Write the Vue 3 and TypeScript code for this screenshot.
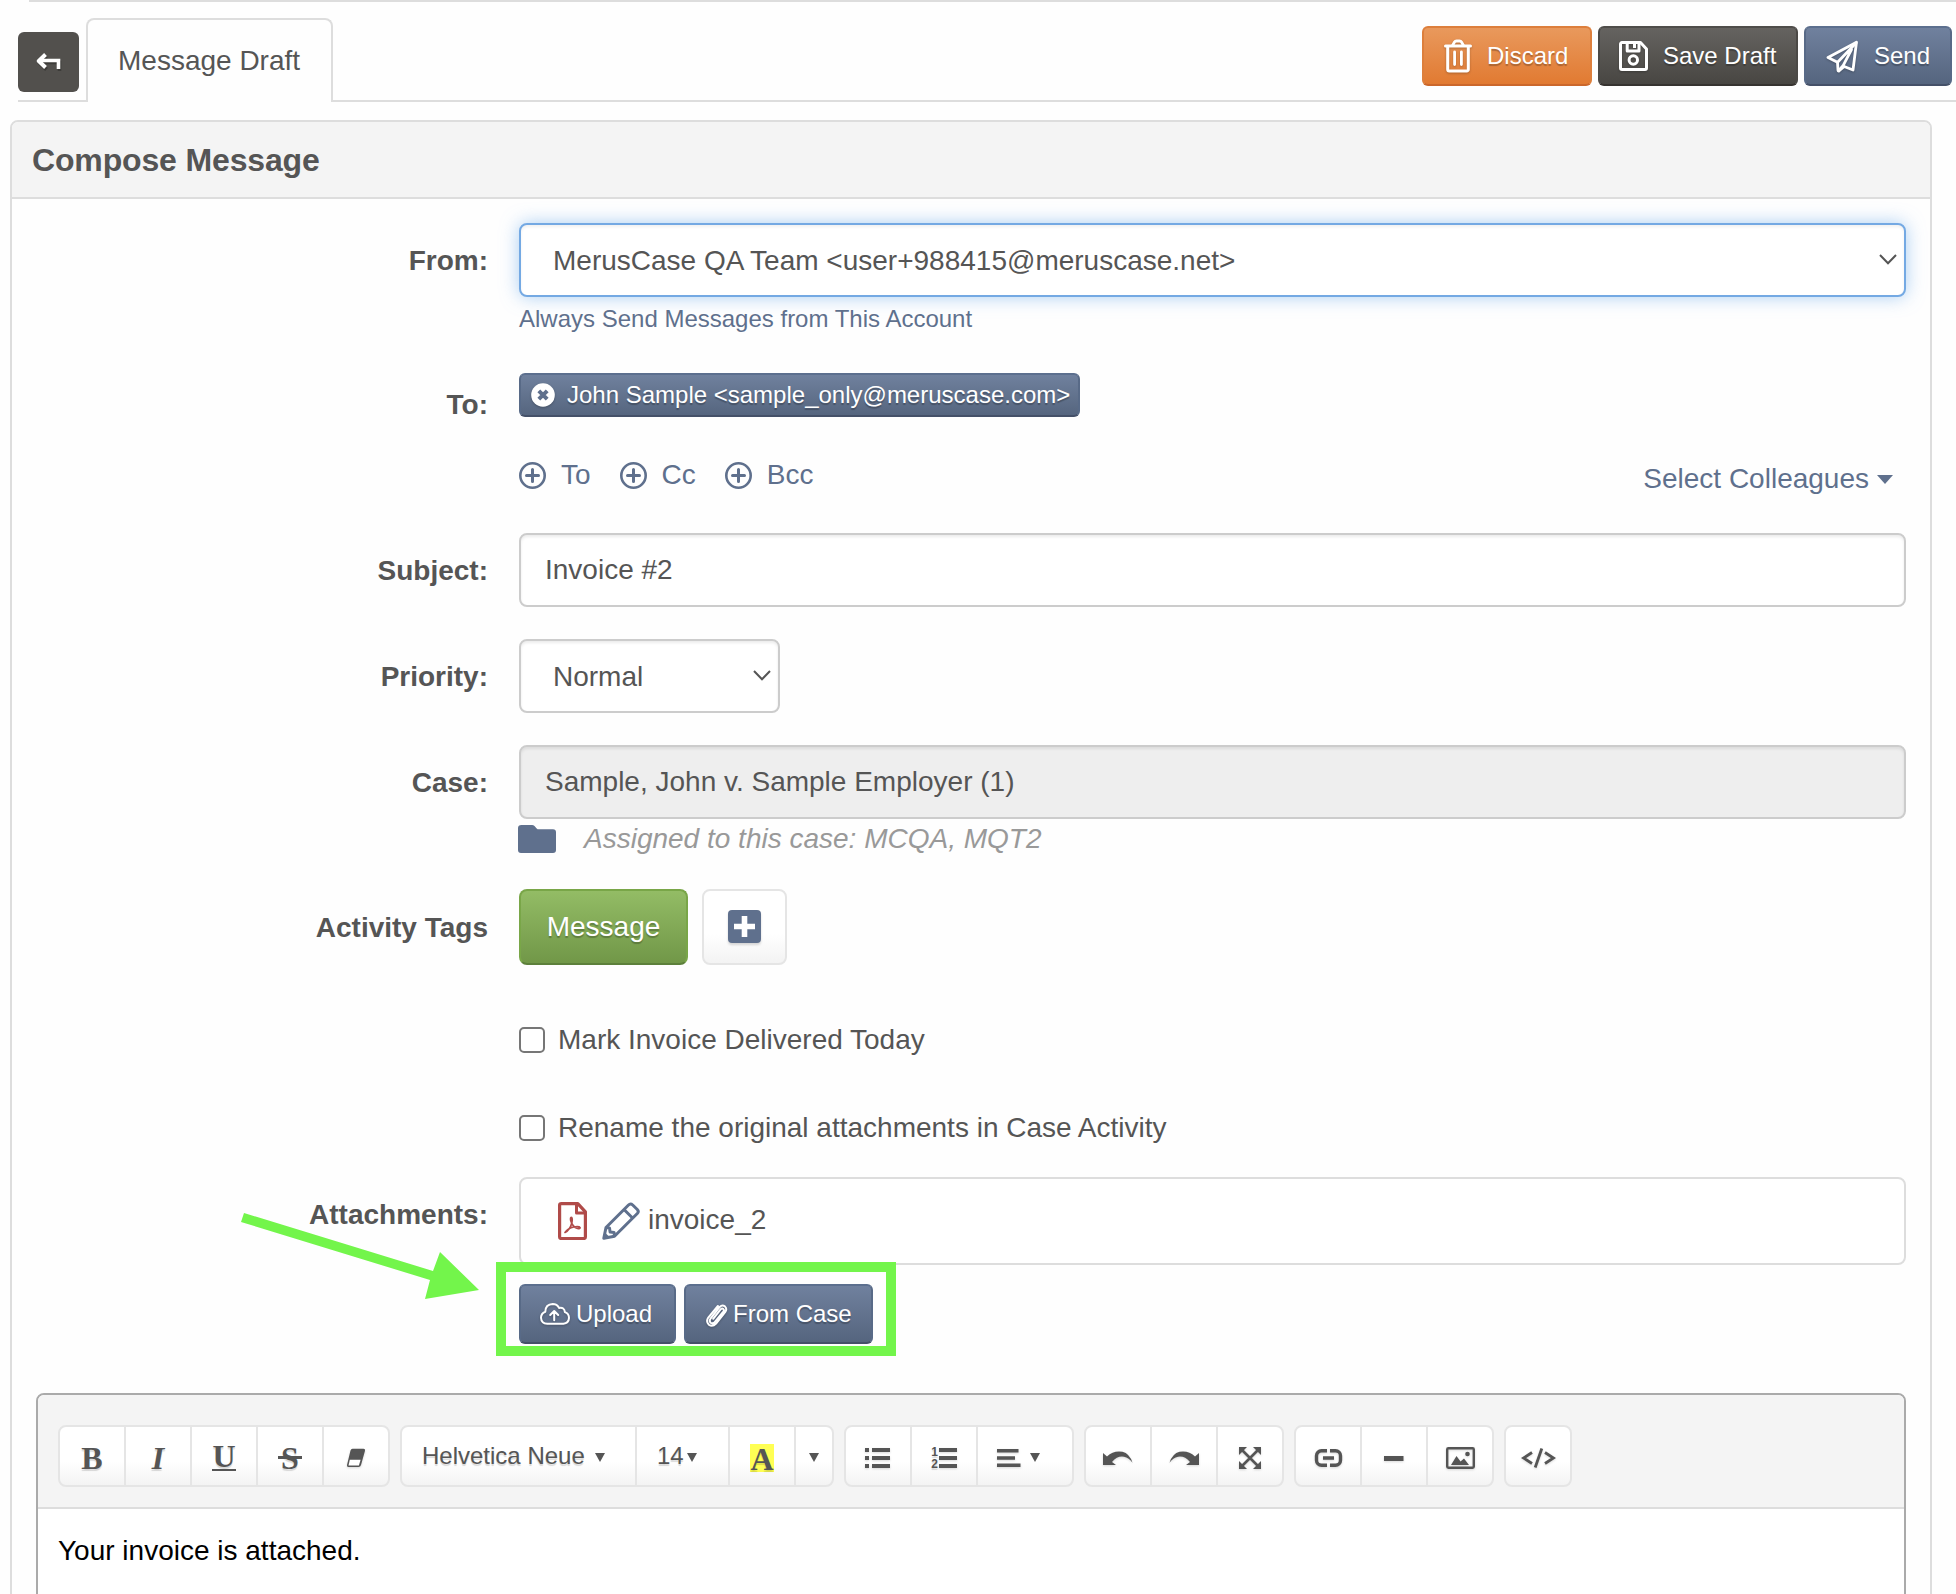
<script setup lang="ts">
interface Recipient {
  label: string
}

const recipientTypes: Recipient[] = [{ label: 'To' }, { label: 'Cc' }, { label: 'Bcc' }]
const options: string[] = [
  'Mark Invoice Delivered Today',
  'Rename the original attachments in Case Activity',
]
</script>

<template>
  <div class="page">
    <div class="top-rule"></div>
    <header class="topbar">
      <button class="back" aria-label="Back">
        <svg width="25" height="18" viewBox="0 0 25 18" fill="none" stroke="#fff" stroke-width="4">
          <path d="M9.500 1.500 2.800 8l6.700 6.500" stroke-linejoin="round" />
          <path d="M3 7.500h19.500v8.500" stroke-width="3.600" />
        </svg>
      </button>
      <div class="tab">Message Draft</div>
      <div class="actions">
        <button class="btn orange discard">
          <svg width="28" height="34" viewBox="0 0 28 34" fill="none" stroke="#fff" stroke-width="3" stroke-linejoin="round" stroke-linecap="round">
            <path d="M1.500 7h25M3.700 8v22.500a1.500 1.500 0 0 0 1.500 1.500h17.600a1.500 1.500 0 0 0 1.500-1.500V8" />
            <path d="M8.500 6.500 10.500 3q.6-1 2-1h3q1.400 0 2 1l2 3.500M10.600 13v12.500M17.400 13v12.500" stroke-width="2.800" />
          </svg>
          <span>Discard</span>
        </button>
        <button class="btn dark save">
          <svg width="29" height="30" viewBox="0 0 29 30" fill="none" stroke="#fff" stroke-width="3" stroke-linejoin="round">
            <path d="M3 1.500h18.500l6 6.500V27a1.500 1.500 0 0 1-1.500 1.500H3A1.500 1.500 0 0 1 1.500 27V3A1.500 1.500 0 0 1 3 1.500z" />
            <path d="M8.200 2v8h11.800V2M15.500 3v4" />
            <circle cx="14.300" cy="19" r="4.200" />
          </svg>
          <span>Save Draft</span>
        </button>
        <button class="btn blue send">
          <svg width="33" height="33" viewBox="0 0 33 33" fill="none" stroke="#fff" stroke-width="2.800" stroke-linejoin="round" stroke-linecap="round">
            <path d="M30.500 2.200 2 17.500l9.500 4.800.5 8q.2 1.200 1.200.5l5-4.300 8.800 3.500z" />
            <path d="M30 3 11.600 22.300M25.500 9.500 17 25.800l-4 4.500" />
          </svg>
          <span>Send</span>
        </button>
      </div>
    </header>

    <section class="panel">
      <h1 class="panel-title">Compose Message</h1>
      <div class="form">
        <div class="row">
          <label class="lab drop">From:</label>
          <div>
            <div class="field select focus">
              <span>MerusCase QA Team &lt;user+988415@meruscase.net&gt;</span>
              <svg class="chev" width="18" height="11" viewBox="0 0 18 11"><path d="M1 1l8 8.200L17 1" fill="none" stroke="#555" stroke-width="2" /></svg>
            </div>
            <a class="always">Always Send Messages from This Account</a>
          </div>
        </div>

        <div class="row to-row">
          <label class="lab to-lab">To:</label>
          <div>
            <div class="btn blue chip">
              <svg width="24" height="24" viewBox="0 0 24 24"><circle cx="12" cy="12" r="11.800" fill="#fff" /><path d="M7.800 7.800l8.400 8.400M16.200 7.800l-8.400 8.400" stroke="#5f708d" stroke-width="4" /></svg>
              <span>John Sample &lt;sample_only@meruscase.com&gt;</span>
            </div>
            <div class="adders">
              <a v-for="r in recipientTypes" :key="r.label" class="adder">
                <svg width="27" height="27" viewBox="0 0 27 27" fill="none" stroke="#5f708d"><circle cx="13.500" cy="13.500" r="12.200" stroke-width="2.600" /><path d="M13.500 7.500v12M7.500 13.500h12" stroke-width="3" stroke-linecap="round" /></svg>
                <span>{{ r.label }}</span>
              </a>
              <a class="colleagues">Select Colleagues<i class="caret"></i></a>
            </div>
          </div>
        </div>

        <div class="row subject">
          <label class="lab drop">Subject:</label>
          <div class="field">Invoice #2</div>
        </div>
        <div class="row gap30">
          <label class="lab drop">Priority:</label>
          <div class="field select priority">
            <span>Normal</span>
            <svg class="chev" width="18" height="11" viewBox="0 0 18 11"><path d="M1 1l8 8.200L17 1" fill="none" stroke="#555" stroke-width="2" /></svg>
          </div>
        </div>
        <div class="row gap30">
          <label class="lab drop">Case:</label>
          <div>
            <div class="field disabled">Sample, John v. Sample Employer (1)</div>
            <div class="assigned">
              <svg width="38" height="28" viewBox="0 0 38 28"><path d="M3.500 0H14q1.500 0 2.500 1l2.200 2.400q.8.900 2 .9H35q3 0 3 3V25q0 3-3 3H3q-3 0-3-3V3Q0 0 3.500 0z" fill="#5f708d" /></svg>
              <em>Assigned to this case: MCQA, MQT2</em>
            </div>
          </div>
        </div>

        <div class="row gap30">
          <label class="lab tags-lab">Activity Tags</label>
          <div class="tags">
            <button class="btn green">Message</button>
            <button class="add-tag" aria-label="Add tag">
              <svg width="33" height="33" viewBox="0 0 33 33"><rect width="33" height="33" rx="4" fill="#5f708d" /><path d="M16.500 6v21M6 16.500h21" stroke="#fff" stroke-width="5.600" /></svg>
            </button>
          </div>
        </div>

        <div v-for="o in options" :key="o" class="row check-row">
          <span></span>
          <label class="check"><input type="checkbox" />{{ o }}</label>
        </div>

        <div class="row attach-row">
          <label class="lab att-lab">Attachments:</label>
          <div>
            <div class="files">
              <svg class="pdf" width="29" height="38" viewBox="0 0 29 38" fill="none" stroke="#b04b49" stroke-width="3.200" stroke-linejoin="round">
                <path d="M3.500 1.600h16.300l7.600 8.200V35a1.500 1.500 0 0 1-1.500 1.500H3.100A1.500 1.500 0 0 1 1.600 35V3.100Q1.600 1.600 3.500 1.600z" />
                <path d="M18.500 2v9h9" stroke-width="3" />
                <path d="M7 30.500q5-2.500 6.800-9.500 1-4.500-.2-5.500-1.500-.5-.9 3 1.800 6.500 6.800 8 2.800.3 2.600-.9-.8-1.500-6.300-.6-5.800 1-8.800 5.500z" stroke-width="1.700" />
              </svg>
              <svg class="pencil" width="38" height="38" viewBox="0 0 38 38" fill="none" stroke="#5f708d" stroke-width="3" stroke-linejoin="round">
                <path d="M1.800 36.200 4 25.500 26.500 3q2-2 4.200 0L35.300 7.500q1.900 2 0 4L12.500 34.200z" />
                <path d="M22 7.500l8.800 8.800M4.200 25.600l3.300.4.600 4 4 .5.400 3.700" />
                <path d="M2 36l1-5.500 4.500 4.500z" fill="#5f708d" stroke="none" />
              </svg>
              <span>invoice_2</span>
            </div>
            <div class="att-buttons">
              <button class="btn blue upload">
                <svg width="30" height="22" viewBox="0 0 30 22" fill="none" stroke="#fff" stroke-width="2" stroke-linecap="round" stroke-linejoin="round">
                  <path d="M7.300 20.700q-6-.3-6.300-6 0-4.300 4.300-6Q5.500 1.300 12.700 1q4.300 0 6.500 3.900 5.100-.9 5.700 4.200 4.100 1.500 4.100 5.800-.3 5.300-5.600 5.800z" />
                  <path d="M14.200 17.200V8.500M10.200 12l4-4 4 4" />
                </svg>
                <span>Upload</span>
              </button>
              <button class="btn blue from-case">
                <svg width="22" height="25" viewBox="0 0 22 25" fill="none" stroke="#fff" stroke-width="2" stroke-linecap="round">
                  <path d="M7.200 16.800 14.600 7.400q1.500-1.500 2.700-.4 1.200 1.100 0 2.700L8.700 20.200q-2 2-4 .5-1.800-1.700-.2-4L13.700 5q2.500-2.600 5.200-.6 2.500 2.500.4 5.500L10.100 21.500q-3.600 3.700-7.200 1.200-3.300-3.200-.6-7.200L11.900 4" />
                </svg>
                <span>From Case</span>
              </button>
            </div>
          </div>
        </div>

        <div class="editor">
          <div class="toolbar">
            <div class="group">
              <button class="serif">B</button>
              <button class="serif ital">I</button>
              <button class="serif under"><span>U</span></button>
              <button class="serif strike"><span>S</span></button>
              <button>
                <svg width="20" height="20" viewBox="0 0 20 20"><path d="M6.500.8h11q2 0 1.500 2l-4 14.200q-.6 2-2.500 2h-10Q.5 19 1 17L4.500 2.500Q5 .8 6.500.8z" fill="#555" /><path d="M3.800 11.800h10.800l-1.700 5.600H2.500z" fill="#fff" /></svg>
              </button>
            </div>
            <div class="group">
              <button class="font-name">Helvetica Neue<i class="tri"></i></button>
              <button class="font-size">14<i class="tri"></i></button>
              <button class="serif"><span class="hl">A</span></button>
              <button class="narrow"><i class="tri"></i></button>
            </div>
            <div class="group">
              <button>
                <svg width="26" height="22" viewBox="0 0 26 22" fill="#555"><path d="M0 1h4v4H0zM7 1h18v4H7zM0 9h4v4H0zM7 9h18v4H7zM0 17h4v4H0zM7 17h18v4H7z" /></svg>
              </button>
              <button class="numbered">
                <span class="nums"><b>1</b><b>2</b></span>
                <svg width="18" height="22" viewBox="0 0 18 22" fill="#555"><path d="M0 1h18v4H0zM0 9h18v4H0zM0 17h18v4H0z" /></svg>
              </button>
              <button class="align">
                <svg width="24" height="20" viewBox="0 0 24 20" fill="#555"><path d="M0 1h21.500v3.600H0zM0 8.200h18v3.600H0zM0 15.400h23.500V19H0z" /></svg>
                <i class="tri"></i>
              </button>
            </div>
            <div class="group">
              <button>
                <svg width="30" height="15" viewBox="0 0 30 15" fill="#555"><path d="M0 2v12h13l-4-3q5.500-6.500 12-5.300 5 1 8.500 6Q26.500 2.600 19.500.8 10.500-.8 4 5.500z" /></svg>
              </button>
              <button>
                <svg width="30" height="15" viewBox="0 0 30 15" fill="#555"><path d="M30 2v12H17l4-3Q15.500 4.500 9 5.700 4 6.700.5 11.700 3.500 2.600 10.500.8 19.500-.8 26 5.500z" /></svg>
              </button>
              <button>
                <svg width="22" height="22" viewBox="0 0 22 22"><path d="M0 0h8L0 8zM22 0v8l-8-8zM0 22v-8l8 8zM22 22h-8l8-8z" fill="#555" /><path d="M3 3l16 16M19 3 3 19" stroke="#555" stroke-width="2.600" /></svg>
              </button>
            </div>
            <div class="group">
              <button>
                <svg width="29" height="18" viewBox="0 0 29 18" fill="none" stroke="#555" stroke-width="3.400"><path d="M13 1.800H7.500a5 5 0 0 0-5 5v4.400a5 5 0 0 0 5 5H13M16 1.800h5.500a5 5 0 0 1 5 5v4.400a5 5 0 0 1-5 5H16M9 9h11" /></svg>
              </button>
              <button><svg width="20" height="5" viewBox="0 0 20 5"><path d="M0 0h19.500v5H0z" fill="#555" /></svg></button>
              <button>
                <svg width="29" height="22" viewBox="0 0 29 22" fill="none" stroke="#555"><rect x="1.200" y="1.200" width="26.600" height="19.600" rx="1.200" stroke-width="2.400" /><path d="M5 18 10.500 9l4 5.500 3.500-3L23 18z" fill="#555" stroke="none" /><circle cx="21.500" cy="7" r="2.300" fill="#555" stroke="none" /></svg>
              </button>
            </div>
            <div class="group">
              <button class="code">
                <svg width="35" height="20" viewBox="0 0 35 20" fill="none" stroke="#555" stroke-width="2.800"><path d="M11 4.500 2.500 10l8.500 5.500M24 4.500l8.500 5.500-8.500 5.500M20.800.5l-6.600 19" /></svg>
              </button>
            </div>
          </div>
          <div class="body">Your invoice is attached.</div>
        </div>
      </div>
    </section>

    <div class="highlight-box"></div>
    <svg class="arrow" width="242" height="90" viewBox="0 0 242 90">
      <path d="M4 3 193 61 200 42 239 80 185 89 190 70 1 12z" fill="#73f54b" />
    </svg>
  </div>
</template>

<style>
body {
  background: #fff;
}
</style>

<style scoped>
.page {
  position: relative;
  width: 1956px;
  height: 1594px;
  overflow: hidden;
  background: #fefefe;
  color: #555;
  font: 28px/40px 'Liberation Sans', Arial, sans-serif;
}
.page * {
  box-sizing: border-box;
}
button {
  font: inherit;
  margin: 0;
  padding: 0;
  color: inherit;
  border: 0;
}
svg {
  display: block;
  flex: none;
}
.top-rule {
  height: 2px;
  margin-left: 29px;
  background: #ddd;
}
.topbar {
  display: flex;
  height: 100px;
  margin-left: 18px;
  border-bottom: 2px solid #ddd;
}
.back {
  display: flex;
  align-items: center;
  justify-content: center;
  width: 61px;
  height: 60px;
  margin-top: 30px;
  border-radius: 6px;
  background: #52504d;
}
.back svg {
  filter: drop-shadow(1px 2px 0 rgba(0, 0, 0, 0.25));
}
.tab {
  width: 247px;
  height: 84px;
  margin: 16px 0 0 7px;
  padding-left: 30px;
  line-height: 82px;
  border: 2px solid #ddd;
  border-bottom: 0;
  border-radius: 8px 8px 0 0;
  background: #fefefe;
  white-space: nowrap;
}
.actions {
  display: flex;
  gap: 6px;
  margin: 24px 4px 0 auto;
}
.btn {
  display: flex;
  align-items: center;
  height: 60px;
  border: 2px solid;
  border-radius: 6px;
  color: #fff;
  font-size: 24px;
  text-shadow: 0 2px 1px rgba(0, 0, 0, 0.25);
  white-space: nowrap;
  background-origin: border-box;
}
.btn svg {
  filter: drop-shadow(0 1px 1px rgba(0, 0, 0, 0.25));
}
.orange {
  border-color: #dd7f3c #dd7f3c #cb672b;
  background-image: linear-gradient(#e99a5e, #e17930);
}
.dark {
  border-color: #4f4d4a #4b4946 #363330;
  background-image: linear-gradient(#666461, #474541);
}
.blue {
  border-color: #5c6f8e #586a87 #445068;
  background-image: linear-gradient(#71829f, #54647d);
}
.green {
  justify-content: center;
  width: 169px;
  height: 76px;
  font-size: 28px;
  border-radius: 8px;
  border-color: #79a648 #79a648 #5d803b;
  background-image: linear-gradient(#94bd66, #709647);
}
.discard {
  width: 170px;
  padding-left: 20px;
  gap: 15px;
}
.save {
  width: 200px;
  padding-left: 19px;
  gap: 15px;
}
.send {
  width: 148px;
  padding-left: 20px;
  gap: 15px;
}
.panel {
  width: 1922px;
  height: 1600px;
  margin: 18px 0 0 10px;
  border: 2px solid #ddd;
  border-radius: 8px;
}
.panel-title {
  height: 77px;
  margin: 0;
  padding-left: 20px;
  font-size: 32px;
  line-height: 76px;
  background: #f4f4f4;
  border-bottom: 2px solid #ddd;
  border-radius: 6px 6px 0 0;
  letter-spacing: -0.15px;
}
.form {
  padding-top: 24px;
}
.row {
  display: grid;
  grid-template-columns: 476px 1387px;
  column-gap: 31px;
}
.gap30 {
  margin-top: 30px;
}
.lab {
  font-weight: bold;
  text-align: right;
}
.drop {
  line-height: 76px;
}
.field {
  display: flex;
  align-items: center;
  height: 74px;
  padding-left: 24px;
  border: 2px solid #ccc;
  border-radius: 8px;
  background: #fff;
  box-shadow: inset 0 2px 3px rgba(0, 0, 0, 0.08);
  white-space: nowrap;
}
.select {
  justify-content: space-between;
  padding: 2px 7px 0 32px;
}
.chev {
  margin-top: -3px;
}
.focus {
  border-color: #74a9e3;
  box-shadow: inset 0 2px 3px rgba(0, 0, 0, 0.06), 0 0 18px rgba(102, 168, 233, 0.55);
}
.priority {
  width: 261px;
}
.disabled {
  background: #eee;
}
.always {
  display: block;
  margin-top: 4px;
  font-size: 24px;
  line-height: 36px;
  color: #5f708d;
}
.to-row {
  margin-top: 36px;
}
.to-lab {
  margin-top: 10px;
  line-height: 44px;
}
.chip {
  width: 561px;
  height: 44px;
  padding-left: 10px;
  gap: 12px;
}
.adders {
  display: flex;
  height: 40px;
  margin-top: 38px;
  color: #5f708d;
}
.adder {
  display: flex;
  align-items: center;
  gap: 15px;
  margin-right: 29px;
}
.colleagues {
  display: flex;
  align-items: center;
  margin: 4px 13px -4px auto;
}
.caret {
  margin: 0 0 0 8px;
  border: 8px solid transparent;
  border-top: 9px solid #5f708d;
  border-bottom: 0;
}
.subject {
  margin-top: 38px;
}
.assigned {
  display: flex;
  align-items: center;
  height: 40px;
  gap: 28px;
  margin-left: -1px;
  color: #999;
}
.tags-lab {
  line-height: 78px;
}
.tags {
  display: flex;
  gap: 14px;
}
.add-tag {
  display: flex;
  align-items: center;
  justify-content: center;
  width: 85px;
  height: 76px;
  padding-bottom: 2px;
  border: 2px solid #e5e5e5;
  border-radius: 8px;
  background: linear-gradient(#fff 60%, #f3f3f3);
}
.add-tag svg {
  filter: drop-shadow(0 2px 1px rgba(0, 0, 0, 0.15));
}
.check-row {
  margin-top: 53px;
}
.check-row + .check-row {
  margin-top: 48px;
}
.check {
  display: flex;
  align-items: center;
  gap: 13px;
}
.check input {
  appearance: none;
  width: 26px;
  height: 26px;
  margin: 0;
  border: 2px solid #767676;
  border-radius: 5px;
  background: #fff;
}
.attach-row {
  margin-top: 29px;
}
.att-lab {
  margin-top: 18px;
}
.files {
  display: flex;
  align-items: center;
  height: 88px;
  padding-left: 37px;
  border: 2px solid #ddd;
  border-radius: 8px;
  background: #fff;
}
.pencil {
  margin: 0 8px 0 15px;
}
.files span {
  margin-top: -3px;
}
.att-buttons {
  display: flex;
  gap: 8px;
  margin-top: 19px;
}
.upload {
  width: 157px;
  padding-left: 19px;
  gap: 6px;
}
.from-case {
  width: 189px;
  padding-left: 20px;
  gap: 5px;
}
.editor {
  width: 1870px;
  height: 400px;
  margin: 49px 0 0 24px;
  border: 2px solid #aaa;
  border-radius: 8px;
  background: #fff;
}
.toolbar {
  display: flex;
  gap: 10px;
  height: 114px;
  padding: 30px 20px;
  background: #f4f4f4;
  border-bottom: 2px solid #ddd;
  border-radius: 6px 6px 0 0;
}
.group {
  display: flex;
  height: 62px;
}
.group button {
  display: flex;
  align-items: center;
  justify-content: center;
  width: 68px;
  height: 62px;
  margin-left: -2px;
  border: 2px solid #e5e5e5;
  background: linear-gradient(#fff 60%, #f3f3f3);
  font-size: 24px;
  text-shadow: 0 2px 1px rgba(0, 0, 0, 0.15);
}
.group button:first-child {
  margin-left: 0;
  border-radius: 8px 0 0 8px;
}
.group button:last-child {
  border-radius: 0 8px 8px 0;
}
.group button:only-child {
  border-radius: 8px;
}
.group svg {
  margin-top: 4px;
  filter: drop-shadow(0 1px 1px rgba(0, 0, 0, 0.15));
}
.group .serif {
  font: bold 32px/34px 'Liberation Serif', 'Times New Roman', serif;
  padding-top: 4px;
}
.group .ital {
  font-style: italic;
}
.under span {
  height: 26px;
  line-height: 22px;
  border-bottom: 2px solid #555;
}
.strike span {
  position: relative;
}
.strike span::after {
  content: '';
  position: absolute;
  left: -3px;
  right: -3px;
  top: 15px;
  height: 3px;
  background: #555;
}
.tri {
  border: 5px solid transparent;
  border-top: 9px solid #555;
  border-bottom: 0;
  margin-top: 3px;
}
.group .font-name {
  width: 237px;
  justify-content: flex-start;
  padding-left: 20px;
}
.font-name .tri {
  margin-left: 10px;
}
.group .font-size {
  width: 95px;
  justify-content: flex-start;
  padding-left: 20px;
}
.font-size .tri {
  margin-left: 3px;
}
.group .narrow {
  width: 40px;
}
.hl {
  width: 24px;
  height: 28px;
  line-height: 31px;
  text-align: center;
  background: #ffff54;
}
.numbered .nums {
  display: flex;
  flex-direction: column;
  margin: 4px 1px 0 0;
  font-size: 12px;
  line-height: 12px;
}
.group .align {
  width: 98px;
  justify-content: flex-start;
  padding-left: 19px;
  gap: 9px;
}
.body {
  padding: 22px 20px;
  color: #000;
}
.highlight-box {
  position: absolute;
  left: 496px;
  top: 1262px;
  width: 400px;
  height: 94px;
  border: 10px solid #73f54b;
}
.arrow {
  position: absolute;
  left: 240px;
  top: 1210px;
}
</style>
